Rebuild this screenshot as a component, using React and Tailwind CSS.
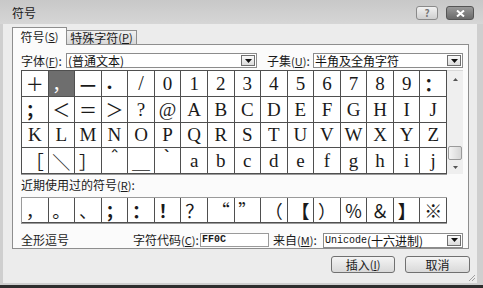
import React from "react";

const rows = [
  ["＋", "，", "—", ".", "/", "0", "1", "2", "3", "4", "5", "6", "7", "8", "9", "："],
  ["；", "＜", "＝", "＞", "?", "@", "A", "B", "C", "D", "E", "F", "G", "H", "I", "J"],
  ["K", "L", "M", "N", "O", "P", "Q", "R", "S", "T", "U", "V", "W", "X", "Y", "Z"],
  ["［", "＼", "］", "＾", "＿", "｀", "a", "b", "c", "d", "e", "f", "g", "h", "i", "j"],
];

const recent = ["，", "。", "、", "；", "：", "！", "？", "“", "”", "（", "【", "）", "％", "＆", "】", "※"];

const bold = ["—", "：", "；", "！", "【", "】", "."];

// per-glyph placement tweaks
const place = {
  ".": "justify-start items-end pl-[5px] pb-[3px] text-[22px]",
  "/": "text-[20px]",
  "＾": "text-[20px]",
  "｀": "text-[20px]",
};

const Cell = ({ ch, selected }) => {
  const wide = ch.charCodeAt(0) > 0x2000;
  return (
    <div
      className={`flex items-center justify-center border-r border-b border-[#4f4f4f] leading-none ${
        selected ? "bg-[#6e6e6e] text-white" : "bg-white text-[#1a1a1a]"
      } ${
        wide
          ? "font-['Noto_Sans_CJK_SC',sans-serif] text-[18px]"
          : "font-['Liberation_Serif',serif] text-[19px]"
      } ${bold.includes(ch) ? "font-bold" : ""} ${place[ch] || ""}`}
    >
      {ch}
    </div>
  );
};

const Arrow = () => (
  <svg width="7" height="4" viewBox="0 0 7 4">
    <path d="M0 0h7L3.5 4z" fill="#111" />
  </svg>
);

const Combo = ({ className, children }) => (
  <div className={`flex h-[15px] items-stretch border border-[#8c8c8c] bg-white ${className}`}>
    <div className="flex flex-1 items-center whitespace-nowrap pl-[1px] text-[12px] leading-[13px] text-[#111]">
      {children}
    </div>
    <div className="m-px flex w-[14px] items-center justify-center border border-[#6f6f6f] bg-gradient-to-b from-[#fafafa] to-[#dcdcdc]">
      <Arrow />
    </div>
  </div>
);

const Key = ({ k }) => (
  <span className="text-[11px]">
    (<u>{k}</u>)
  </span>
);

export default function App() {
  return (
    <div className="flex h-[288px] w-[483px] flex-col overflow-hidden bg-[#cfcfcf] font-['Noto_Sans_CJK_SC','Liberation_Sans',sans-serif] text-[12px] text-[#1a1a1a]">
      {/* Title bar */}
      <div className="flex h-[24px] items-start justify-between bg-gradient-to-b from-[#c8c8c8] to-[#d6d6d6] pl-[12px] pr-[9px]">
        <span className="mt-[6px] leading-[14px]">符号</span>
        <div className="mt-[6px] flex gap-[8px]">
          <div className="flex h-[14px] w-[22px] items-center justify-center rounded-[3px] border border-[#8a8a8a] bg-gradient-to-b from-[#f2f2f2] to-[#cfcfcf] text-[10px] font-bold leading-none text-[#777]">
            ?
          </div>
          <div className="flex h-[14px] w-[28px] items-center justify-center rounded-[3px] border border-[#555] bg-gradient-to-b from-[#9a9a9a] to-[#6a6a6a]">
            <svg width="9" height="7" viewBox="0 0 9 7">
              <path d="M1 0.5 8 6.5M8 0.5 1 6.5" stroke="#fff" strokeWidth="2" />
            </svg>
          </div>
        </div>
      </div>

      {/* Client area */}
      <div className="ml-[3px] mr-[6px] flex h-[259px] flex-col bg-[#ececec] pl-[9px] pt-[3px]">
        {/* Tabs */}
        <div className="relative z-10 flex items-end">
          <div className="-mb-px flex h-[18px] w-[55px] items-center justify-center border border-b-0 border-[#8e8e8e] bg-[#fbfbfb]">
            符号<Key k="S" />
          </div>
          <div className="flex h-[14px] w-[70px] items-center justify-center border border-l-0 border-b-0 border-[#8e8e8e] bg-gradient-to-b from-[#f0f0f0] to-[#d8d8d8]">
            特殊字符<Key k="P" />
          </div>
        </div>

        {/* Panel */}
        <div className="flex h-[209px] w-[457px] flex-col border border-[#8e8e8e] bg-[#fbfbfb] pl-[8px] pt-[8px]">
          <div className="flex h-[15px] items-center">
            <span className="w-[45px] leading-none">
              字体<Key k="F" />:
            </span>
            <Combo className="w-[191px]">(普通文本)</Combo>
            <span className="ml-[10px] w-[46px] leading-none">
              子集<Key k="U" />:
            </span>
            <Combo className="w-[150px]">半角及全角字符</Combo>
          </div>

          {/* Symbol grid */}
          <div className="mt-[2px] flex h-[104px]">
            <div className="grid w-[426px] grid-cols-16 grid-rows-4 border-l border-t border-[#4f4f4f] shadow-[0_1px_0_#9a9a9a]">
              {rows.flat().map((ch, i) => (
                <Cell key={i} ch={ch} selected={i === 1} />
              ))}
            </div>
            <div className="flex w-[16px] flex-col border-t border-[#d8d8d8] bg-[#efefef]">
              <div className="flex h-[16px] items-center justify-center">
                <svg width="5" height="3" viewBox="0 0 5 3">
                  <path d="M0 3h5L2.5 0z" fill="#555" />
                </svg>
              </div>
              <div className="flex-1" />
              <div className="mx-px h-[14px] rounded-[2px] border border-[#9a9a9a] bg-gradient-to-r from-[#f4f4f4] to-[#d6d6d6]" />
              <div className="flex h-[14px] items-center justify-center">
                <svg width="5" height="3" viewBox="0 0 5 3">
                  <path d="M0 0h5L2.5 3z" fill="#555" />
                </svg>
              </div>
            </div>
          </div>

          <div className="mt-[4px] leading-[14px]">
            近期使用过的符号<Key k="R" />:
          </div>

          <div className="mt-[5px] grid h-[26px] w-[426px] grid-cols-16 border-l border-t border-[#9a9a9a] shadow-[0_1px_0_#9a9a9a]">
            {recent.map((ch, i) => (
              <Cell key={i} ch={ch} />
            ))}
          </div>

          <div className="mt-[10px] flex h-[14px] items-center">
            <span className="w-[112px] leading-none">全形逗号</span>
            <span className="w-[67px] leading-none">
              字符代码<Key k="C" />:
            </span>
            <div className="flex h-[14px] w-[69px] items-center border border-[#9a9a9a] bg-white pl-[1px] font-['Liberation_Mono',monospace] text-[10px] font-bold leading-none">
              FF0C
            </div>
            <span className="ml-[4px] w-[50px] leading-none">
              来自<Key k="M" />:
            </span>
            <Combo className="w-[140px]">
              <span className="font-['Liberation_Mono',monospace] text-[10px]">Unicode</span>(十六进制)
            </Combo>
          </div>
        </div>

        {/* Buttons */}
        <div className="mt-[7px] flex justify-end gap-[10px] pr-[7px]">
          <div className="flex h-[17px] w-[64px] items-center justify-center rounded-[3px] border border-[#707070] bg-gradient-to-b from-[#f4f4f4] to-[#d9d9d9] leading-none">
            插入<Key k="I" />
          </div>
          <div className="flex h-[17px] w-[65px] items-center justify-center rounded-[3px] border border-[#707070] bg-gradient-to-b from-[#f4f4f4] to-[#d9d9d9] leading-none">
            取消
          </div>
        </div>
        <div className="flex flex-1 items-end justify-end pb-[1px] pr-[1px]">
          <svg width="9" height="9" viewBox="0 0 9 9">
            <path d="M8 2 2 8M8 5 5 8" stroke="#a0a0a0" strokeWidth="1" />
          </svg>
        </div>
      </div>
      <div className="h-[2px] bg-[#cfcfcf]" />
      <div className="flex-1 bg-[#2e2e2e]" />
    </div>
  );
}
